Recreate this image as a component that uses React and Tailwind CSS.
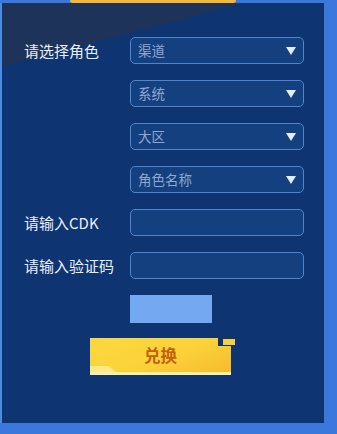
import * as React from 'react';

const font = { fontFamily: '"Noto Sans CJK SC", "Noto Sans", sans-serif' };

const Caret = () => (
  <svg width="10" height="8" viewBox="0 0 10 8" className="shrink-0">
    <path d="M0 0 H10 L5 8 Z" fill="#e3ecf9" />
  </svg>
);

const Box = ({ placeholder, select }) => (
  <div className="w-[174px] h-[27px] rounded-[5px] border border-[#4f85cc] bg-[#15407f] flex items-center justify-between pl-[7px] pr-[7px]">
    <span className="text-[13.5px] leading-none text-[#8fa8cf]">{placeholder}</span>
    {select && <Caret />}
  </div>
);

const Row = ({ label, children }) => (
  <div className="flex items-center h-[27px]">
    <span className="w-[106px] text-[15px] leading-none text-[#e9eff9]">{label}</span>
    {children}
  </div>
);

export default function App() {
  return (
    <div className="w-[337px] h-[434px] bg-[#3a78dc] overflow-hidden" style={font}>
      <div className="h-[3px] flex">
        <div className="ml-[70px] w-[166px] h-[3px] rounded-b-full bg-[#f4b93a]" />
      </div>
      <div className="relative w-[324px] h-[420px] bg-[#0e3471] border-l-2 border-[#4d8be0]">
        <svg className="absolute left-0 top-0" width="250" height="70" viewBox="0 0 250 70">
          <path d="M0 0 H242 L0 64 Z" fill="#1e3359" />
        </svg>
        <div className="relative flex flex-col gap-[16px] pt-[34px] pl-[22px]">
          <Row label="请选择角色"><Box placeholder="渠道" select /></Row>
          <Row><Box placeholder="系统" select /></Row>
          <Row><Box placeholder="大区" select /></Row>
          <Row><Box placeholder="角色名称" select /></Row>
          <Row label="请输入CDK"><Box /></Row>
          <Row label="请输入验证码"><Box /></Row>
          <div className="ml-[106px] w-[82px] h-[28px] bg-[#74a8f0]" />
          <div className="relative ml-[66px] -mt-px w-[141px] h-[37px]">
            <div className="w-full h-full bg-[linear-gradient(160deg,#fbd83e_0%,#fbd23a_55%,#f6bb2d_100%)] border-b-[3px] border-[#fff0a0] flex items-center justify-center">
              <span className="text-[16.5px] font-bold leading-none text-[#c4600e]">兑换</span>
            </div>
            <div className="absolute left-0 bottom-[3px] w-[26px] h-[6px] bg-[#fde98a] [clip-path:polygon(0_0,70%_0,100%_100%,0_100%)]" />
            <div className="absolute right-0 top-0 w-[13px] h-[8px] bg-[#0e3471]" />
            <div className="absolute -right-[4px] top-[1px] w-[12px] h-[6px] bg-[#f6d13a]" />
          </div>
        </div>
      </div>
    </div>
  );
}
